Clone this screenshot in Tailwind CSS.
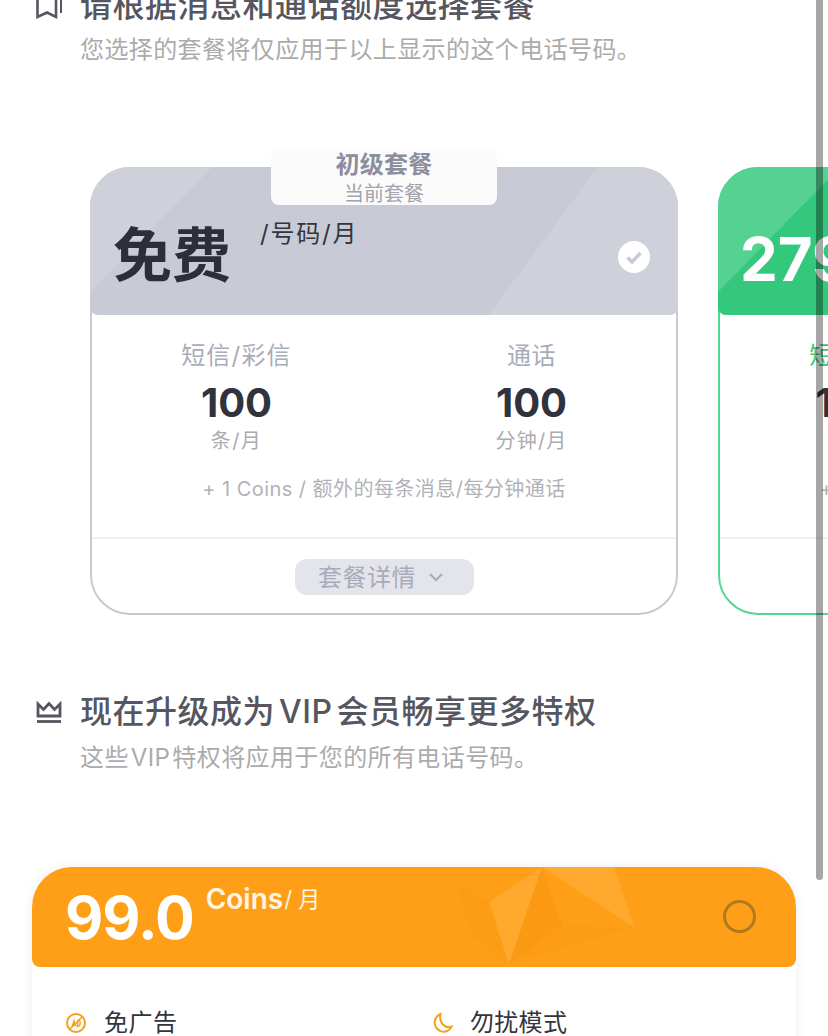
<!DOCTYPE html>
<html lang="zh">
<head>
<meta charset="utf-8">
<script src="https://cdn.jsdelivr.net/npm/@tailwindcss/browser@4"></script>
</head>
<body class="m-0">
<div class="relative w-[828px] h-[1036px] overflow-hidden bg-white font-['Inter','Noto_Sans_CJK_SC',sans-serif]">
  <!-- section 1 heading -->
  <div class="flex pl-[36px] -mt-[14px]">
    <svg class="w-[26px] h-[26px] mt-[15px] shrink-0 overflow-visible" viewBox="0 0 26 26" fill="none" stroke="#55565f" stroke-width="2.6"><path d="M1.5 -4V16L11 11.5L20 16V-4"/><path d="M25 -4V12" stroke-width="2"/></svg>
    <div class="ml-[18px]">
      <div class="text-[32px] leading-[40px] font-medium text-[#55565f] tracking-[0.5px] whitespace-nowrap">请根据消息和通话额度选择套餐</div>
      <div class="text-[24px] leading-[32px] mt-[8px] text-[#ababab] tracking-[0.4px] whitespace-nowrap">您选择的套餐将仅应用于以上显示的这个电话号码。</div>
    </div>
  </div>

  <!-- plan cards -->
  <div class="flex gap-[40px] pl-[90px] mt-[101px]">
    <div class="relative shrink-0 w-[588px] h-[448px] rounded-[40px] border-2 border-[#c9c9cc] bg-white">
      <div class="relative -m-[2px] h-[148px] rounded-t-[40px] rounded-b-[8px] bg-[#c8cbd5] overflow-hidden">
        <svg class="absolute inset-0 w-full h-full" viewBox="0 0 587 148" preserveAspectRatio="none"><path d="M0 125L122 0H0Z" fill="#fff" fill-opacity=".13"/><path d="M398 148L507 0H587V148Z" fill="#fff" fill-opacity=".13"/></svg>
        <div class="relative flex pl-[23px] pt-[55px]">
          <span class="text-[59px] leading-[68px] font-bold text-[#2c2e38]">免费</span>
          <span class="ml-[29px] -mt-[5px] text-[24px] leading-[34px] text-[#33343d] tracking-[1.8px]">/号码/月</span>
        </div>
        <span class="absolute right-[28px] top-[74px] flex items-center justify-center w-[32px] h-[32px] rounded-full bg-white">
          <svg class="w-[18px] h-[18px]" viewBox="0 0 18 18" fill="none" stroke="#c8cbd5" stroke-width="3.6"><path d="M2.5 9.5L7 14L15.5 5"/></svg>
        </span>
      </div>
      <div class="absolute left-[179px] -top-[21px] w-[226px] h-[57px] rounded-[8px] bg-[#fbfbfc] flex flex-col items-center pt-[2px]">
        <span class="text-[24px] leading-[30px] font-bold text-[#8b8e9d] tracking-[0.3px]">初级套餐</span>
        <span class="text-[20px] leading-[24px] mt-[2px] text-[#a2a3ab]">当前套餐</span>
      </div>
      <div class="grid grid-cols-2 -mx-[3px] mt-[26px] text-center">
        <div class="flex flex-col items-center">
          <span class="text-[24px] leading-[34px] text-[#a9acb9] tracking-[1.2px]">短信/彩信</span>
          <span class="text-[40px] leading-[48px] mt-[6px] font-bold text-[#30323e]">100</span>
          <span class="text-[20px] leading-[28px] text-[#ababb0] tracking-[1.5px]">条/月</span>
        </div>
        <div class="flex flex-col items-center">
          <span class="text-[24px] leading-[34px] text-[#a9acb9] tracking-[0.5px]">通话</span>
          <span class="text-[40px] leading-[48px] mt-[6px] font-bold text-[#30323e]">100</span>
          <span class="text-[20px] leading-[28px] text-[#ababb0] tracking-[1.2px]">分钟/月</span>
        </div>
      </div>
      <div class="mt-[20px] text-center text-[20px] leading-[28px] text-[#b2b2b6] tracking-[0.45px]">+ 1 Coins / 额外的每条消息/每分钟通话</div>
      <div class="mt-[34px] border-t-2 border-[#f1f1f2] flex justify-center pt-[20px]">
        <div class="w-[179px] h-[36px] rounded-[12px] bg-[#e4e5ea] flex items-center justify-center gap-[12px] pr-[6px]">
          <span class="text-[24px] leading-[37px] text-[#a8abbb] tracking-[0.5px]">套餐详情</span>
          <svg class="w-[16px] h-[10px]" viewBox="0 0 16 10" fill="none" stroke="#a8abbb" stroke-width="2"><path d="M2 2L8 8L14 2"/></svg>
        </div>
      </div>
    </div>

    <div class="relative shrink-0 w-[588px] h-[448px] rounded-[40px] border-2 border-[#52d893] bg-white">
      <div class="relative -m-[2px] h-[148px] rounded-t-[40px] rounded-b-[8px] bg-[#33c87b] overflow-hidden">
        <svg class="absolute inset-0 w-full h-full" viewBox="0 0 587 148" preserveAspectRatio="none"><path d="M0 125L122 0H0Z" fill="#fff" fill-opacity=".17"/></svg>
        <div class="relative pl-[22px] pt-[58px]">
          <span class="text-[60px] leading-[68px] font-bold text-white">279</span>
        </div>
      </div>
      <div class="grid grid-cols-2 -mx-[3px] mt-[26px] text-center">
        <div class="flex flex-col items-center">
          <span class="text-[24px] leading-[34px] text-[#33c87b] tracking-[1.2px]">短信/彩信</span>
          <span class="text-[40px] leading-[48px] mt-[6px] font-bold text-[#30323e]">1000</span>
          <span class="text-[20px] leading-[28px] text-[#ababb0] tracking-[1.5px]">条/月</span>
        </div>
      </div>
      <div class="mt-[20px] text-center text-[20px] leading-[28px] text-[#b2b2b6] tracking-[0.4px]">+ 0.5 Coins / 额外的每条消息/每分钟通话</div>
      <div class="mt-[34px] border-t-2 border-[#f1f1f2]"></div>
    </div>
  </div>

  <!-- section 2 heading -->
  <div class="flex pl-[36px] mt-[77px]">
    <svg class="w-[26px] h-[24px] mt-[9px] shrink-0" viewBox="0 0 26 24" fill="none" stroke="#55565f" stroke-width="2.8"><path d="M2 3L7.5 8.5L13 2.5L18.5 8.5L24 3V15H2Z"/><path d="M1 20.5H25" stroke-width="2.8"/></svg>
    <div class="ml-[18px]">
      <div class="text-[32px] leading-[40px] font-medium text-[#55565f] tracking-[0.5px] whitespace-nowrap">现在升级成为<span class="mx-[4px]">VIP</span>会员畅享更多特权</div>
      <div class="text-[24px] leading-[32px] mt-[10px] text-[#ababab] tracking-[0.4px] whitespace-nowrap">这些<span class="mx-[2px]">VIP</span>特权将应用于您的所有电话号码。</div>
    </div>
  </div>

  <!-- VIP card -->
  <div class="mx-[32px] mt-[93px] rounded-t-[40px] bg-white shadow-[0_0_12px_rgba(0,0,0,0.07)] h-[300px]">
    <div class="relative h-[100px] rounded-t-[40px] rounded-b-[8px] bg-[#ff9f18] overflow-hidden">
      <svg class="absolute inset-0 w-full h-full" viewBox="0 0 764 100" fill="none">
        <path d="M424 15L457 35L477 97L440 70Z" fill="#fb9c14" fill-opacity=".6"/>
        <path d="M510 0L457 35L477 97Z" fill="#ffa92e"/>
        <path d="M510 0L530 58L477 97Z" fill="#fb9a12"/>
        <path d="M530 58L602 60L477 97Z" fill="#fd9d15"/>
        <path d="M510 0L602 60L582 0Z" fill="#ffa92e"/>
      </svg>
      <div class="relative flex pl-[33px] pt-[19px]">
        <span class="text-[59px] leading-[64px] font-bold text-white tracking-[-1px]">99.0</span>
        <span class="ml-[12px] -mt-[4px] text-[28px] leading-[34px] font-semibold text-[#fff6e6]">Coins</span>
        <span class="text-[22px] leading-[34px] -mt-[4px] ml-[1px] text-[#fff6e6]">/ 月</span>
      </div>
      <span class="absolute right-[40px] top-[33px] w-[33px] h-[33px] rounded-full border-[3px] border-[#b27a1f]"></span>
    </div>
    <div class="grid grid-cols-2 pt-[40px]">
      <div class="flex items-center pl-[33px] gap-[17px]">
        <svg class="w-[22px] h-[22px] shrink-0" viewBox="0 0 22 22" fill="none" stroke="#f5a01d" stroke-width="2"><circle cx="11" cy="11" r="9"/><path d="M5 17L17 5" stroke-width="1.5"/><path d="M7 15L9 8.5L10.5 14M7.7 12.5H10M12.2 14.5L13 8.2C15.8 7.8 16.5 13.8 12.2 14.5Z" stroke-width="1.4"/></svg>
        <span class="text-[24px] leading-[32px] text-[#33343d] tracking-[0.5px]">免广告</span>
      </div>
      <div class="flex items-center pl-[18px] gap-[16px]">
        <svg class="w-[22px] h-[22px] shrink-0" viewBox="0 0 22 22" fill="none" stroke="#f5a01d" stroke-width="2"><path d="M8.5 2C3.5 4 1.8 9.5 3.2 13.5C5 19 11.5 21.5 16 18.5C17.5 17.5 18.8 16.3 19.5 14.8C13.5 16.8 6.5 11 8.5 2Z"/></svg>
        <span class="text-[24px] leading-[32px] text-[#33343d] tracking-[0.3px]">勿扰模式</span>
      </div>
    </div>
  </div>

  <!-- scrollbar overlay -->
  <div class="absolute left-[816px] top-0 w-[7px] h-[880px] rounded-b-[4px] bg-black/35"></div>
</div>
</body>
</html>
